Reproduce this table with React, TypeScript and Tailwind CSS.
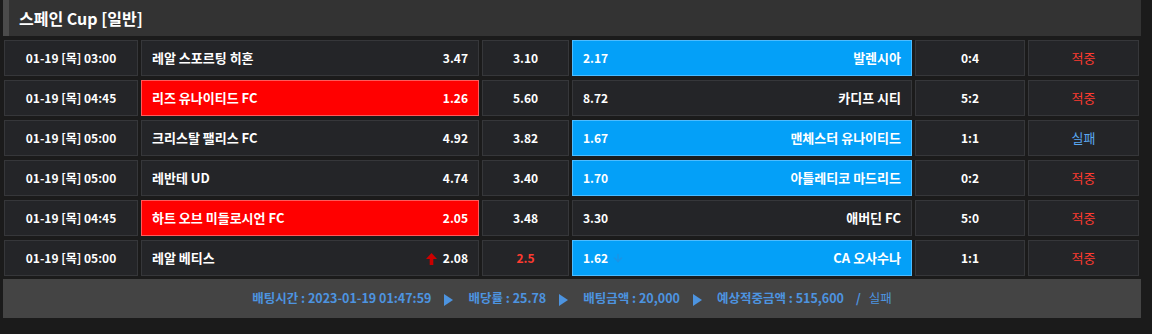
import { ArrowDown } from "lucide-react";

type Row = {
  date: string;
  home: string;
  homeOdds: string;
  draw: string;
  away: string;
  awayOdds: string;
  score: string;
  result: "적중" | "실패";
  pick: "home" | "away";
  drawRed?: boolean;
  homeUp?: boolean;
  awayDown?: boolean;
};

const rows: Row[] = [
  { date: "01-19 [목] 03:00", home: "레알 스포르팅 히혼", homeOdds: "3.47", draw: "3.10", away: "발렌시아", awayOdds: "2.17", score: "0:4", result: "적중", pick: "away" },
  { date: "01-19 [목] 04:45", home: "리즈 유나이티드 FC", homeOdds: "1.26", draw: "5.60", away: "카디프 시티", awayOdds: "8.72", score: "5:2", result: "적중", pick: "home" },
  { date: "01-19 [목] 05:00", home: "크리스탈 팰리스 FC", homeOdds: "4.92", draw: "3.82", away: "맨체스터 유나이티드", awayOdds: "1.67", score: "1:1", result: "실패", pick: "away" },
  { date: "01-19 [목] 05:00", home: "레반테 UD", homeOdds: "4.74", draw: "3.40", away: "아틀레티코 마드리드", awayOdds: "1.70", score: "0:2", result: "적중", pick: "away" },
  { date: "01-19 [목] 04:45", home: "하트 오브 미들로시언 FC", homeOdds: "2.05", draw: "3.48", away: "애버딘 FC", awayOdds: "3.30", score: "5:0", result: "적중", pick: "home" },
  { date: "01-19 [목] 05:00", home: "레알 베티스", homeOdds: "2.08", draw: "2.5", away: "CA 오사수나", awayOdds: "1.62", score: "1:1", result: "적중", pick: "away", drawRed: true, homeUp: true, awayDown: true },
];

const cell = "h-full flex items-center border border-[#36373a] bg-[#242528]";
const redCell = "h-full flex items-center border border-[#ff5a5a] bg-[#ff0000]";
const blueCell = "h-full flex items-center border border-[#4dbcff] bg-[#04a0f8]";

const Arrow = () => (
  <span className="ml-[13px] mr-[15px] inline-block w-0 h-0 border-y-[6px] border-y-transparent border-l-[9px] border-l-[#4d94e0] translate-y-[1px]" />
);

// filled up arrow used for odds going up
const UpArrow = () => (
  <svg width="11" height="12" viewBox="0 0 11 12" className="translate-y-[1px]">
    <path d="M5.5 0 L11 6 L7.3 6 L7.3 12 L3.7 12 L3.7 6 L0 6 Z" fill="#cc0000" />
  </svg>
);

export default function App() {
  return (
    <div
      className="w-[1152px] h-[334px] bg-[#1b1b1b] text-white text-[12px] font-bold overflow-hidden"
      style={{ fontFamily: '"Noto Sans CJK KR", "Noto Sans", sans-serif' }}
    >
      <div className="ml-[3px] w-[1138px]">
        {/* title */}
        <div className="h-[36px] bg-[#333333] border-l-[6px] border-[#4b4b4b] flex items-center pl-[10px] text-[16px]">
          스페인 Cup [일반]
        </div>

        {/* match rows */}
        <div className="mt-[4px] pl-[1px] flex flex-col gap-[4px]">
          {rows.map((r, i) => (
            <div
              key={i}
              className="h-[36px] grid grid-cols-[134px_338px_87px_340px_110px_111px] gap-x-[3px]"
            >
              <div className={`${cell} justify-center`}>{r.date}</div>
              <div className={`${r.pick === "home" ? redCell : cell} justify-between px-[10px]`}>
                <span className="text-[13px]">{r.home}</span>
                <span className="flex items-center gap-[6px]">
                  {r.homeUp && <UpArrow />}
                  {r.homeOdds}
                </span>
              </div>
              <div className={`${cell} justify-center ${r.drawRed ? "text-[#ff3b30]" : ""}`}>
                {r.draw}
              </div>
              <div className={`${r.pick === "away" ? blueCell : cell} justify-between px-[10px]`}>
                <span className="flex items-center gap-[4px]">
                  {r.awayOdds}
                  {r.awayDown && <ArrowDown size={12} strokeWidth={3} className="text-[#1a94e6]" />}
                </span>
                <span className="text-[13px]">{r.away}</span>
              </div>
              <div className={`${cell} justify-center`}>{r.score}</div>
              <div
                className={`${cell} justify-center font-normal text-[13px] ${
                  r.result === "적중" ? "text-[#ff3b30]" : "text-[#5aa7f0]"
                }`}
              >
                {r.result}
              </div>
            </div>
          ))}
        </div>

        {/* summary */}
        <div className="mt-[3px] h-[39px] bg-[#444444] flex items-center justify-center text-[12.5px] text-[#4d94e0]">
          <span>배팅시간 : 2023-01-19 01:47:59</span>
          <Arrow />
          <span>배당률 : 25.78</span>
          <Arrow />
          <span>배팅금액 : 20,000</span>
          <Arrow />
          <span>예상적중금액 : 515,600</span>
          <span className="ml-[12px]">/</span>
          <span className="ml-[8px] font-normal">실패</span>
        </div>
      </div>
    </div>
  );
}
